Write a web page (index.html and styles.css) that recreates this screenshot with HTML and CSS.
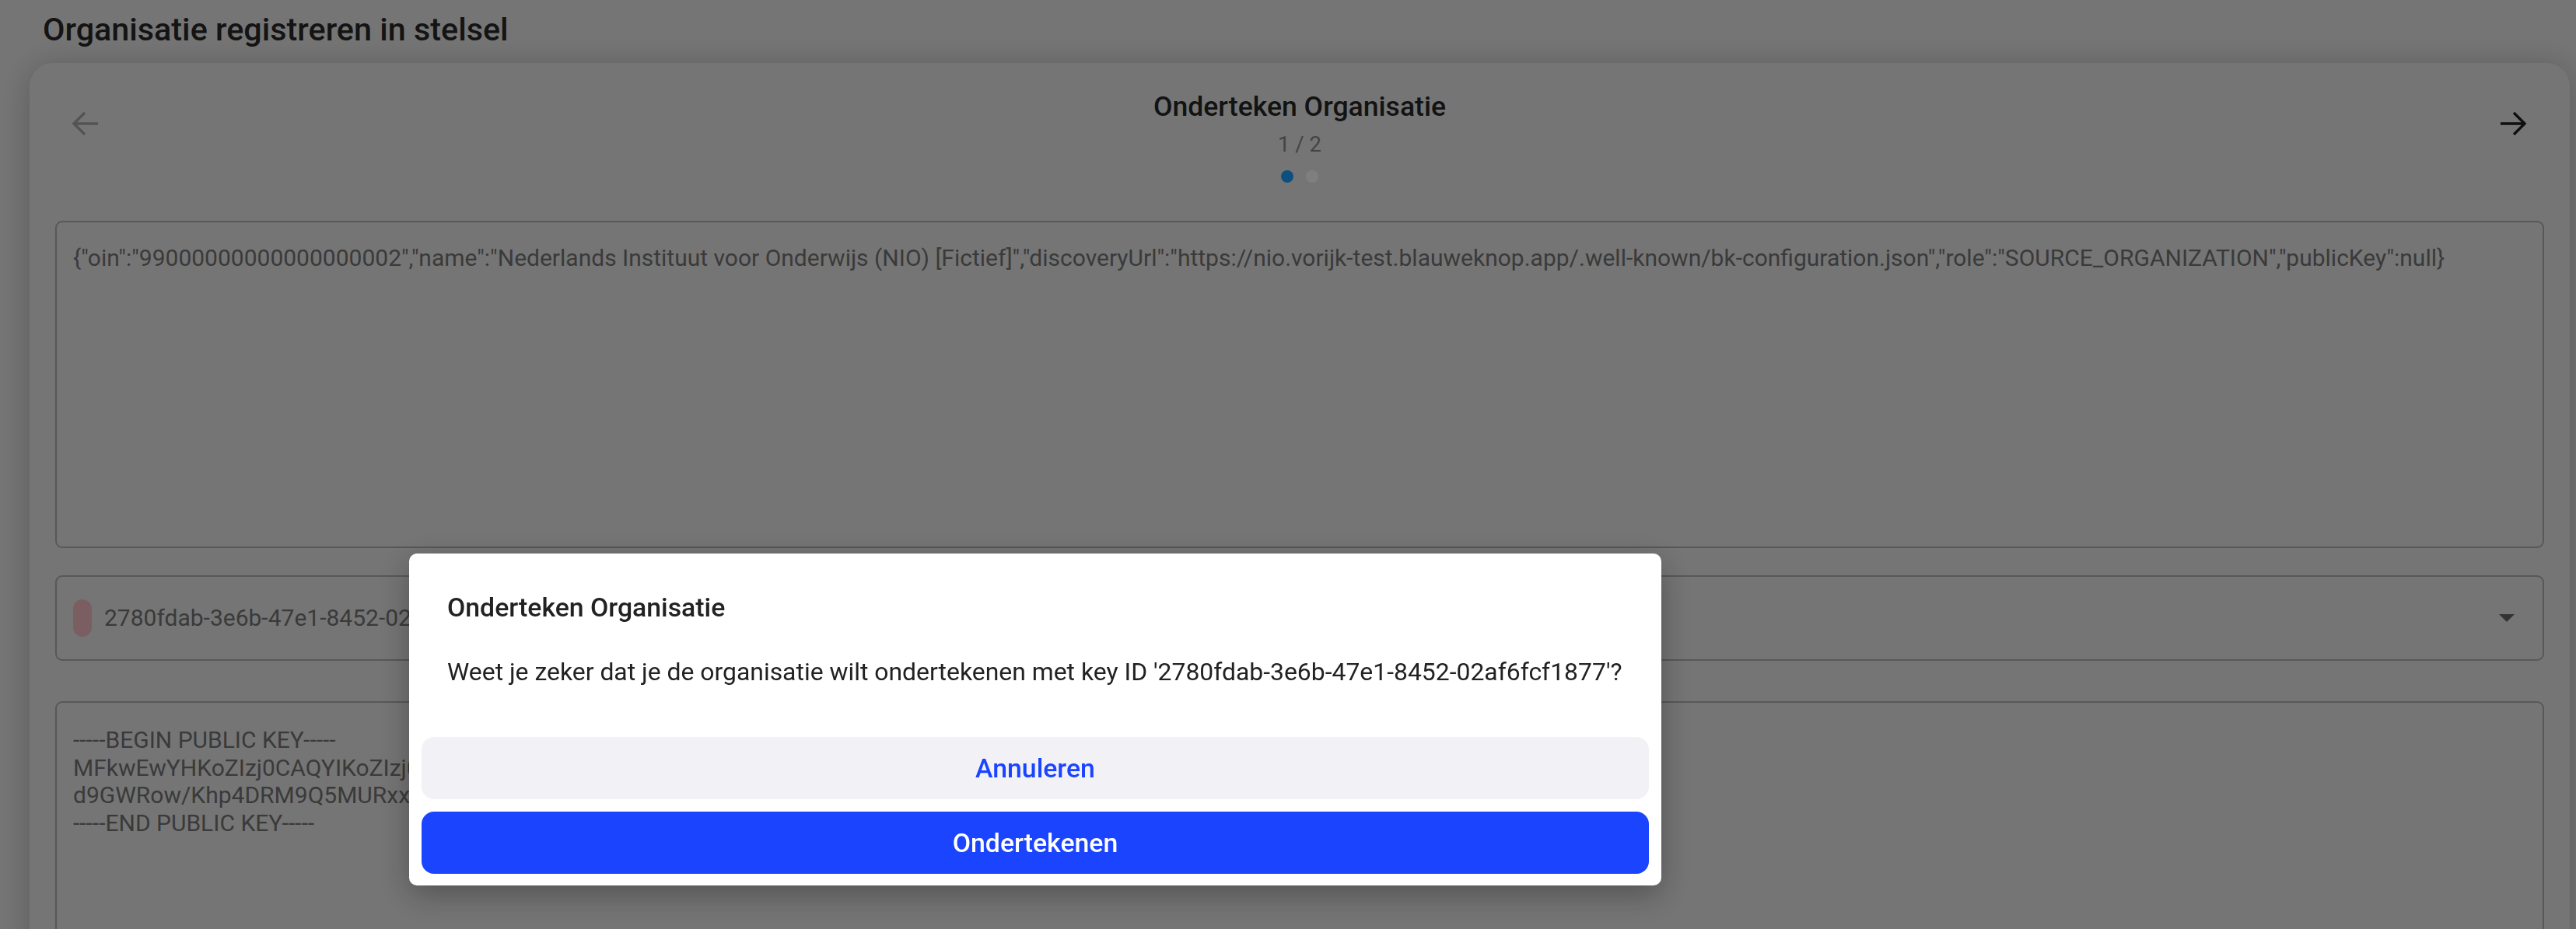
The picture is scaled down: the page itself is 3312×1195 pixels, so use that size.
FILE: index.html
```html
<!DOCTYPE html>
<html lang="nl">
<head>
  <meta charset="utf-8">
  <title>Organisatie registreren in stelsel</title>
  <link rel="stylesheet" href="styles.css">
</head>
<body>
<div class="page">
  <h1 class="page-title">Organisatie registreren in stelsel</h1>
  <div class="card">
    <div class="stepper">
      <button class="nav-btn back" disabled>
        <svg width="36" height="32" viewBox="0 0 36 32"><path d="M34 16H3M17 2L3 16l14 14"/></svg>
      </button>
      <div class="step-head">
        <div class="step-title">Onderteken Organisatie</div>
        <div class="step-count">1 / 2</div>
        <div class="dots"><span class="dot active"></span><span class="dot"></span></div>
      </div>
      <button class="nav-btn next">
        <svg width="36" height="32" viewBox="0 0 36 32"><path d="M2 16h31M19 2l14 14-14 14"/></svg>
      </button>
    </div>

    <textarea class="field json" readonly>{"oin":"99000000000000000002","name":"Nederlands Instituut voor Onderwijs (NIO) [Fictief]","discoveryUrl":"https://nio.vorijk-test.blauweknop.app/.well-known/bk-configuration.json","role":"SOURCE_ORGANIZATION","publicKey":null}</textarea>

    <div class="field select">
      <span class="key-pill"></span>
      <span class="select-text">2780fdab-3e6b-47e1-8452-02af6fcf1877</span>
      <span class="caret"></span>
    </div>

    <textarea class="field pem" readonly>-----BEGIN PUBLIC KEY-----
MFkwEwYHKoZIzj0CAQYIKoZIzj0DAQcDQgAE8vXqT1mK3pZr2hYJc7wLs0NbR5Ue
d9GWRow/Khp4DRM9Q5MURxxkF3aTgV6yH2cJ0pQ4nL8mZsW1eBrA7tUoYiKvXw==
-----END PUBLIC KEY-----</textarea>
  </div>
</div>

<div class="backdrop"></div>

<div class="alert">
  <div class="alert-title">Onderteken Organisatie</div>
  <div class="alert-msg">Weet je zeker dat je de organisatie wilt ondertekenen met key ID '2780fdab-3e6b-47e1-8452-02af6fcf1877'?</div>
  <div class="alert-buttons">
    <button class="alert-btn cancel">Annuleren</button>
    <button class="alert-btn confirm">Ondertekenen</button>
  </div>
</div>
</body>
</html>
```

FILE: styles.css
```css
html, body {
  margin: 0;
  height: 100%;
  overflow: hidden;
}
body {
  background: #ebebeb;
  font-family: Roboto, "Liberation Sans", sans-serif;
  color: #282828;
}
.page {
  padding-top: 14px;
}
.page-title {
  margin: 0 0 0 55px;
  font-size: 41.3px;
  font-weight: 500;
  line-height: 49px;
  color: #282828;
}
.card {
  margin: 18px 8px 0 38px;
  padding: 35px 33px 40px;
  background: #ebebeb;
  border-radius: 30px;
  box-shadow: 0 4px 40px rgba(0, 0, 0, 0.22);
}

/* stepper header */
.stepper {
  display: flex;
  align-items: flex-start;
}
.nav-btn {
  background: none;
  border: 0;
  margin: 0;
  padding: 27px 22px 0 21px;
  cursor: pointer;
}
.nav-btn svg {
  display: block;
  fill: none;
  stroke-width: 3.4;
}
.nav-btn.back svg { stroke: #a8a8a8; }
.nav-btn.next svg { stroke: #1e1e1e; }
.step-head {
  flex: 1;
  text-align: center;
}
.step-title {
  font-size: 35.6px;
  font-weight: 500;
  line-height: 42px;
  color: #262626;
}
.step-count {
  margin-top: 12px;
  font-size: 27.5px;
  line-height: 32px;
  color: #888;
}
.dots {
  display: flex;
  justify-content: center;
  gap: 16px;
  margin-top: 17px;
}
.dot {
  width: 16px;
  height: 16px;
  border-radius: 50%;
  background: #fff;
}
.dot.active {
  background: #1a9eff;
}

/* form fields */
.field {
  display: block;
  box-sizing: border-box;
  width: 100%;
  border: 2px solid #b0b0b0;
  border-radius: 9px;
  background: transparent;
  font-family: Roboto, "Liberation Sans", sans-serif;
  font-size: 30px;
  line-height: 35.5px;
  color: #757575;
}
textarea.field {
  resize: none;
  outline: none;
  overflow: hidden;
}
.json {
  margin-top: 49px;
  height: 421px;
  padding: 28px 21px;
}
.select {
  margin-top: 35px;
  height: 110px;
  display: flex;
  align-items: center;
  padding: 0 36px 0 21px;
}
.key-pill {
  width: 24px;
  height: 48px;
  border-radius: 12px;
  background: #f6bcc4;
}
.select-text {
  margin-left: 16px;
}
.caret {
  margin-left: auto;
  width: 0;
  height: 0;
  border-left: 10px solid transparent;
  border-right: 10px solid transparent;
  border-top: 10px solid #666;
}
.pem {
  margin-top: 52px;
  height: 420px;
  padding: 30px 21px;
}

/* alert */
.backdrop {
  position: fixed;
  inset: 0;
  background: rgba(0, 0, 0, 0.5);
}
.alert {
  position: fixed;
  left: 526px;
  top: 712px;
  width: 1610px;
  height: 427px;
  box-sizing: border-box;
  display: flex;
  flex-direction: column;
  padding: 50px 16px 15px;
  background: #fff;
  border-radius: 10px;
  box-shadow: 0 12px 40px rgba(0, 0, 0, 0.3);
}
.alert-title {
  padding: 0 33px;
  font-size: 33.8px;
  font-weight: 500;
  line-height: 40px;
  color: #222;
}
.alert-msg {
  margin-top: 44px;
  padding: 0 16px 0 33px;
  font-size: 31.9px;
  line-height: 37px;
  color: #222;
}
.alert-buttons {
  margin-top: auto;
  display: flex;
  flex-direction: column;
  gap: 16px;
}
.alert-btn {
  height: 80px;
  border: 0;
  border-radius: 16px;
  font-family: Roboto, "Liberation Sans", sans-serif;
  font-size: 33.8px;
  font-weight: 500;
  cursor: pointer;
}
.alert-btn.cancel {
  background: #f2f2f6;
  color: #1a44ff;
}
.alert-btn.confirm {
  background: #1b44ff;
  color: #fff;
}
```
